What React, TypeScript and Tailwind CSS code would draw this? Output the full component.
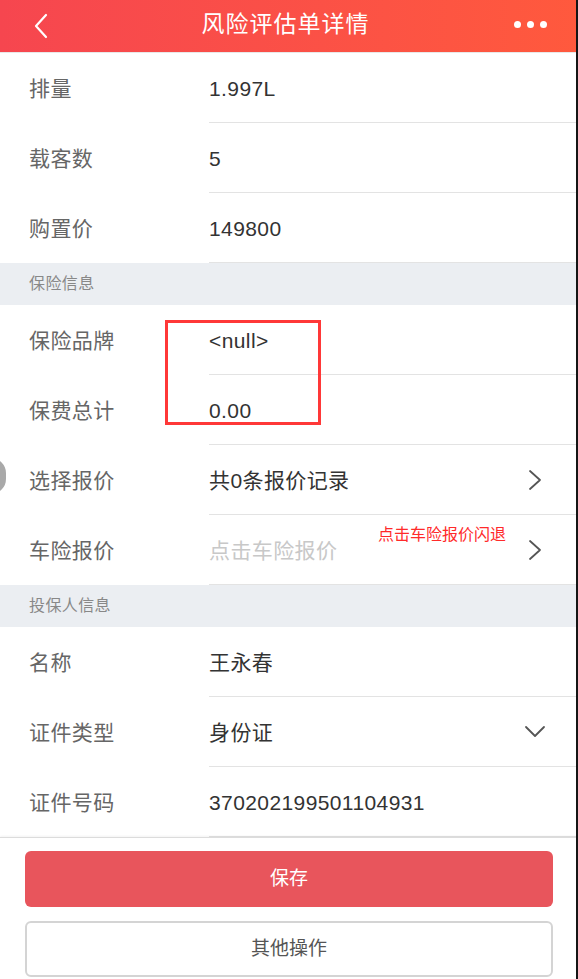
import React from "react";

const FONT = { fontFamily: '"Liberation Sans", "Noto Sans CJK SC", sans-serif' };

type Row = {
  label: string;
  value: string;
  placeholder?: boolean;
  arrow?: "right" | "down";
};

function ChevronRight() {
  return (
    <svg width="14" height="22" viewBox="0 0 14 22" fill="none">
      <path d="M2 2 L12 11 L2 20" stroke="#555" strokeWidth="1.8" strokeLinecap="round" strokeLinejoin="round" />
    </svg>
  );
}

function ChevronDown() {
  return (
    <svg width="22" height="14" viewBox="0 0 22 14" fill="none" className="mr-[-4px]">
      <path d="M2 2 L11 11 L20 2" stroke="#555" strokeWidth="1.8" strokeLinecap="round" strokeLinejoin="round" />
    </svg>
  );
}

function FormRow({ label, value, placeholder, arrow }: Row) {
  return (
    <div className="flex h-[70px] bg-white">
      <div className="w-[209px] shrink-0 pl-[29px] pt-[2px] flex items-center text-[21px] tracking-[0.4px] text-[#666]">
        {label}
      </div>
      <div className="flex-1 flex items-center border-b border-[#e3e3e3] pr-[36px]">
        <span className={`flex-1 pt-[2px] text-[21px] tracking-[0.4px] ${placeholder ? "text-[#c8c8c8]" : "text-[#333]"}`}>
          {value}
        </span>
        {arrow === "right" && <ChevronRight />}
        {arrow === "down" && <ChevronDown />}
      </div>
    </div>
  );
}

function Section({ title }: { title: string }) {
  return (
    <div className="h-[42px] bg-[#ebeef2] pl-[29px] flex items-center text-[16px] tracking-[0.4px] text-[#888]">
      {title}
    </div>
  );
}

export default function App() {
  return (
    <div className="relative w-[578px] h-[979px] overflow-hidden bg-white flex flex-col" style={FONT}>
      {/* Header */}
      <div className="h-[52px] shrink-0 flex items-center justify-between pl-[33px] pr-[31px] pb-[3px] bg-gradient-to-r from-[#f6464f] to-[#ff593d] text-white">
        <svg width="16" height="26" viewBox="0 0 16 26" fill="none" className="mt-[3px]">
          <path d="M13 2 L3 13 L13 24" stroke="#fff" strokeWidth="2.2" strokeLinecap="round" strokeLinejoin="round" />
        </svg>
        <span className="text-[23px] tracking-[1px] ml-[8px]">风险评估单详情</span>
        <div className="flex gap-[6px]">
          <span className="w-[7px] h-[7px] rounded-full bg-white" />
          <span className="w-[7px] h-[7px] rounded-full bg-white" />
          <span className="w-[7px] h-[7px] rounded-full bg-white" />
        </div>
      </div>
      <div className="h-px bg-[#e8e8e8]" />

      <FormRow label="排量" value="1.997L" />
      <FormRow label="载客数" value="5" />
      <FormRow label="购置价" value="149800" />
      <Section title="保险信息" />
      <FormRow label="保险品牌" value="<null>" />
      <FormRow label="保费总计" value="0.00" />
      <FormRow label="选择报价" value="共0条报价记录" arrow="right" />
      <FormRow label="车险报价" value="点击车险报价" placeholder arrow="right" />
      <Section title="投保人信息" />
      <FormRow label="名称" value="王永春" />
      <FormRow label="证件类型" value="身份证" arrow="down" />
      <FormRow label="证件号码" value="370202199501104931" />

      {/* Footer */}
      <div className="flex-1 border-t border-[#dcdcdc] shadow-[0_-1px_2px_rgba(0,0,0,0.05)] px-[25px] pt-[13px] flex flex-col gap-[14px] bg-white">
        <button className="h-[56px] w-full rounded-[6px] bg-[#e8555c] text-white text-[19px]">保存</button>
        <button className="h-[56px] w-full rounded-[6px] border-2 border-[#d4d4d4] bg-white text-[#555] text-[19px]">其他操作</button>
      </div>

      {/* Annotation overlays */}
      <div className="absolute left-[165px] top-[320px] w-[156px] h-[105px] border-[3px] border-[#ff3838]" />
      <div className="absolute left-[378px] top-[523px] text-[16px] text-[#ff2a2a]">点击车险报价闪退</div>
      <div className="absolute left-[-24px] top-[458px] w-[30px] h-[36px] rounded-full bg-[#a9a9a9]" />
      <div className="absolute right-0 top-0 w-[2px] h-full bg-[#151515]" />
    </div>
  );
}
